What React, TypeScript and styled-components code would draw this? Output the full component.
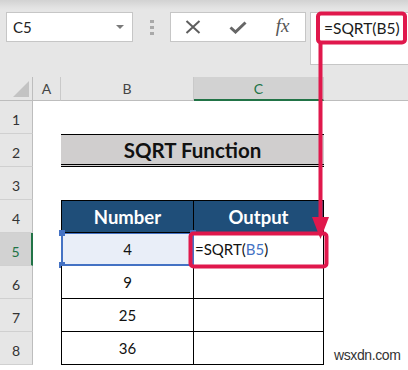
import * as React from 'react'
import styled, { createGlobalStyle, css } from 'styled-components'

const GlobalStyle = createGlobalStyle`
  html, body { margin: 0; padding: 0; background: #fff; }
  body { font-family: Lato, "Liberation Sans", sans-serif; }
`

const Page = styled.div`
  position: relative;
  width: 408px;
  height: 370px;
  overflow: hidden;
  background: #fff;
`

const TopBar = styled.div`
  height: 77px;
  box-sizing: border-box;
  padding-top: 12px;
  display: flex;
  align-items: flex-start;
  background: linear-gradient(#d2d2d2 0px, #e1e1e1 7px, #e6e6e6 10px);
`

const NameBox = styled.div`
  box-sizing: border-box;
  margin-left: 6px;
  width: 127px;
  height: 30px;
  background: #fff;
  border: 1px solid #c6c6c6;
  display: flex;
  align-items: center;
  justify-content: space-between;
  padding: 0 8px 0 6px;
  font-size: 15px;
  color: #222;
`

const Caret = styled.span`
  width: 0;
  height: 0;
  border-left: 4px solid transparent;
  border-right: 4px solid transparent;
  border-top: 4px solid #7a7a7a;
`

const Grip = styled.div`
  width: 37px;
  height: 30px;
  display: flex;
  flex-direction: column;
  align-items: center;
  justify-content: center;
  gap: 3px;

  span {
    width: 4px;
    height: 3px;
    background: #a9a9a9;
  }
`

const FormulaButtons = styled.div`
  box-sizing: border-box;
  width: 136px;
  height: 30px;
  background: #fff;
  border: 1px solid #c6c6c6;
  display: flex;
`

const FxButton = styled.div`
  width: 45px;
  height: 100%;
  display: flex;
  align-items: center;
  justify-content: center;
  color: #5c5c5c;
`

const FxLabel = styled.span`
  font-family: "Liberation Serif", serif;
  font-style: italic;
  font-size: 19px;
  color: #555;
  margin-top: -2px;
`

const FormulaInput = styled.div`
  box-sizing: border-box;
  flex: 1;
  margin-left: 4px;
  height: 53px;
  background: #fff;
  border: 1px solid #c6c6c6;
  border-right: none;
  padding: 0 0 0 13px;
  font-size: 15.5px;
  line-height: 30px;
  color: #1a1a1a;
`

const Sheet = styled.div`
  display: grid;
  grid-template-columns: 33px 28px 133px 130px 1fr;
  grid-template-rows: 24px repeat(8, 33px);
`

const Corner = styled.div`
  box-sizing: border-box;
  background: #e6e6e6;
  border-right: 1px solid #bdbdbd;
  border-bottom: 1px solid #bdbdbd;
  display: flex;
  align-items: flex-end;
  justify-content: flex-end;
  padding: 0 3px 3px 0;

  &::after {
    content: '';
    width: 16px;
    height: 16px;
    background: #c3c3c3;
    clip-path: polygon(100% 0, 100% 100%, 0 100%);
  }
`

const ColHead = styled.div<{ $selected?: boolean; $last?: boolean }>`
  box-sizing: border-box;
  background: #e6e6e6;
  border-right: ${p => (p.$last ? 'none' : '1px solid #c9c9c9')};
  border-bottom: 1px solid #bdbdbd;
  display: flex;
  align-items: center;
  justify-content: center;
  font-size: 14px;
  color: #444;
  ${p =>
    p.$selected &&
    css`
      background: #d2d2d2;
      color: #217346;
      border-bottom: 2px solid #217346;
    `}
`

const RowHead = styled.div<{ $selected?: boolean }>`
  box-sizing: border-box;
  background: #e6e6e6;
  border-right: 1px solid #bdbdbd;
  border-bottom: 1px solid #d0d0d0;
  display: flex;
  align-items: flex-end;
  justify-content: center;
  padding-bottom: 5px;
  font-size: 14px;
  color: #333;
  ${p =>
    p.$selected &&
    css`
      background: #d2d2d2;
      color: #217346;
      border-right: 2px solid #217346;
    `}
`

const Blank = styled.div`
  background: #fff;
`

const TitleCell = styled.div`
  grid-column: span 2;
  box-sizing: border-box;
  background: #d0cece;
  border-top: 1px solid #000;
  border-bottom: 3px double #000;
  display: flex;
  align-items: center;
  justify-content: center;
  font-size: 20.5px;
  font-weight: 700;
  color: #111;
`

const TableCell = styled.div<{ $head?: boolean; $first?: boolean; $top?: boolean; $align?: 'left' | 'center' }>`
  position: relative;
  box-sizing: border-box;
  background: ${p => (p.$head ? '#1f4e79' : '#fff')};
  color: ${p => (p.$head ? '#fff' : '#111')};
  border-right: 1px solid #000;
  border-bottom: 1px solid #000;
  border-left: ${p => (p.$first ? '1px solid #000' : 'none')};
  border-top: ${p => (p.$top ? '1px solid #000' : 'none')};
  display: flex;
  align-items: center;
  justify-content: ${p => (p.$align === 'left' ? 'flex-start' : 'center')};
  padding-left: ${p => (p.$align === 'left' ? '1px' : '0')};
  font-size: ${p => (p.$head ? '18.5px' : '15px')};
  font-weight: ${p => (p.$head ? 700 : 400)};
`

const RefCell = styled(TableCell)`
  background: #e9eef8;
  border: 2px solid #4472c4;
  border-top: 1px solid #4472c4;
`

const Handle = styled.span<{ $x: 'left' | 'right'; $y: 'top' | 'bottom' }>`
  position: absolute;
  width: 6px;
  height: 6px;
  background: #4472c4;
  ${p => (p.$x === 'left' ? 'left: -4px;' : 'right: -4px;')}
  ${p => (p.$y === 'top' ? 'top: -4px;' : 'bottom: -4px;')}
`

const Ref = styled.span`
  color: #4472c4;
`

const Overlay = styled.svg`
  position: absolute;
  left: 0;
  top: 0;
  pointer-events: none;
`

const Watermark = styled.div`
  position: absolute;
  left: 334px;
  top: 347px;
  font-family: "Liberation Sans", Arial, sans-serif;
  font-size: 14px;
  letter-spacing: -0.4px;
  color: #333;
`

const RED = '#e0184c'

const Formula = () => (
  <>
    =SQRT(<Ref>B5</Ref>)
  </>
)

const App = () => {
  const values = ['4', '9', '25', '36']

  return (
    <Page>
      <GlobalStyle />
      <TopBar>
        <NameBox>
          C5
          <Caret />
        </NameBox>
        <Grip>
          <span />
          <span />
          <span />
        </Grip>
        <FormulaButtons>
          <FxButton>
            <svg width="16" height="14" viewBox="0 0 16 14">
              <path d="M1.5 1 L14.5 13 M14.5 1 L1.5 13" stroke="#5e5e5e" strokeWidth="2" fill="none" />
            </svg>
          </FxButton>
          <FxButton>
            <svg width="18" height="13" viewBox="0 0 18 13">
              <path d="M1.5 6.5 L6.5 11 L16.5 1.5" stroke="#666" strokeWidth="3" fill="none" />
            </svg>
          </FxButton>
          <FxButton>
            <FxLabel>fx</FxLabel>
          </FxButton>
        </FormulaButtons>
        <FormulaInput>=SQRT(B5)</FormulaInput>
      </TopBar>

      <Sheet>
        <Corner />
        <ColHead>A</ColHead>
        <ColHead>B</ColHead>
        <ColHead $selected>C</ColHead>
        <ColHead $last />

        <RowHead>1</RowHead>
        <Blank />
        <Blank />
        <Blank />
        <Blank />

        <RowHead>2</RowHead>
        <Blank />
        <TitleCell>SQRT Function</TitleCell>
        <Blank />

        <RowHead>3</RowHead>
        <Blank />
        <Blank />
        <Blank />
        <Blank />

        <RowHead>4</RowHead>
        <Blank />
        <TableCell $head $first $top>Number</TableCell>
        <TableCell $head $top>Output</TableCell>
        <Blank />

        {values.map((v, i) => (
          <React.Fragment key={v}>
            <RowHead $selected={i === 0}>{i + 5}</RowHead>
            <Blank />
            {i === 0 ? (
              <RefCell $first>
                {v}
                <Handle $x="left" $y="top" />
                <Handle $x="left" $y="bottom" />
                <Handle $x="right" $y="top" />
              </RefCell>
            ) : (
              <TableCell $first>{v}</TableCell>
            )}
            <TableCell $align="left">{i === 0 ? <Formula /> : null}</TableCell>
            <Blank />
          </React.Fragment>
        ))}
      </Sheet>

      <Overlay width="408" height="370" viewBox="0 0 408 370">
        <rect x="318" y="13.5" width="87" height="29" rx="3" fill="none" stroke={RED} strokeWidth="4" />
        <line x1="320.5" y1="43" x2="320.5" y2="220" stroke={RED} strokeWidth="4" />
        <polygon points="312,217 329,217 320.5,239" fill={RED} />
        <rect x="190.5" y="233.5" width="136" height="33" rx="3" fill="none" stroke={RED} strokeWidth="4" />
      </Overlay>

      <Watermark>wsxdn.com</Watermark>
    </Page>
  )
}

export default App
